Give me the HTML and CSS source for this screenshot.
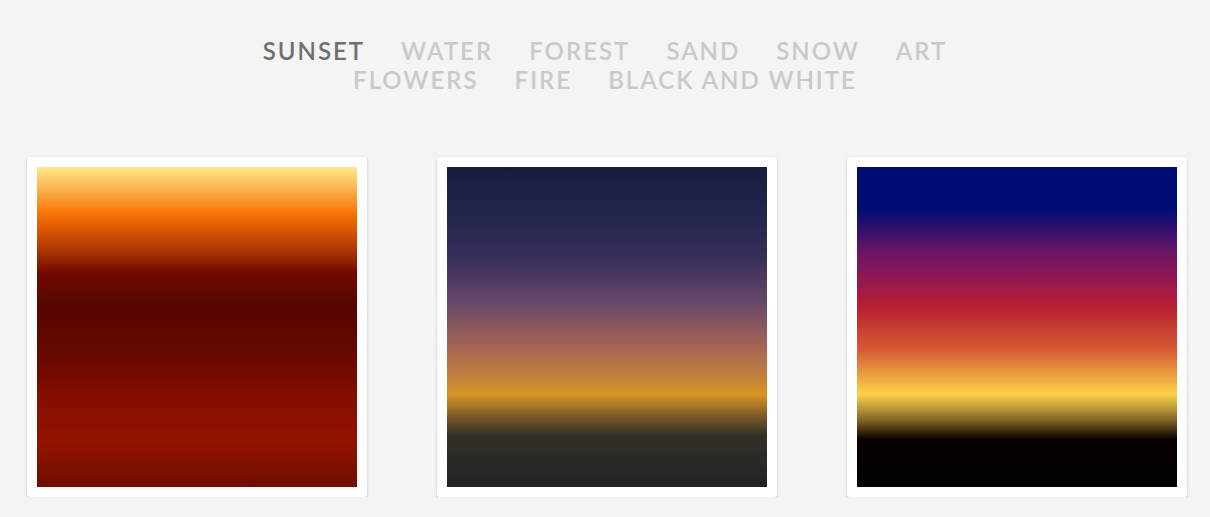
FILE: index.html
```html
<!DOCTYPE html>
<html lang="en">
<head>
<meta charset="utf-8">
<title>Gradients</title>
<link rel="stylesheet" href="styles.css">
</head>
<body>
<nav class="nav">
  <ul class="nav-list">
    <li class="nav-item active">SUNSET</li>
    <li class="nav-item">WATER</li>
    <li class="nav-item">FOREST</li>
    <li class="nav-item">SAND</li>
    <li class="nav-item">SNOW</li>
    <li class="nav-item">ART</li>
    <li class="nav-item">FLOWERS</li>
    <li class="nav-item">FIRE</li>
    <li class="nav-item">BLACK AND WHITE</li>
  </ul>
</nav>
<main class="cards">
  <div class="card"><div class="swatch swatch-1"></div></div>
  <div class="card"><div class="swatch swatch-2"></div></div>
  <div class="card"><div class="swatch swatch-3"></div></div>
</main>
</body>
</html>
```
FILE: styles.css
```css
html, body {
  margin: 0;
  padding: 0;
  background: #f4f4f4;
}
body {
  font-family: Lato, "Open Sans", sans-serif;
}
.nav {
  padding-top: 36px;
}
.nav-list {
  list-style: none;
  margin: 0 auto;
  padding: 0;
  width: 780px;
  display: flex;
  flex-wrap: wrap;
  justify-content: center;
}
.nav-item {
  margin: 0 18px;
  font-size: 24px;
  line-height: 29px;
  font-weight: 600;
  letter-spacing: 2px;
  color: #c9c9c9;
}
.nav-item.active {
  color: #6f6f6f;
}
.cards {
  display: flex;
  gap: 70px;
  padding-left: 27px;
  margin-top: 63px;
}
.card {
  background: #fff;
  padding: 10px;
  border-radius: 3px;
  box-shadow: 0 1px 3px rgba(0, 0, 0, 0.22);
}
.swatch {
  width: 320px;
  height: 320px;
}
.swatch-1 {
  background: linear-gradient(to bottom,
    #ffe98b 0%,
    #f9b24d 7%,
    #f97306 14.6%,
    #b43b02 25%,
    #730a00 33%,
    #560600 42.7%,
    #650800 58%,
    #860e00 73%,
    #931300 86%,
    #6f0c00 100%);
}
.swatch-2 {
  background: linear-gradient(to bottom,
    #161d3e 0%,
    #1d2448 10%,
    #362d58 28%,
    #654769 41.7%,
    #a56455 56%,
    #c78638 67%,
    #da9424 71%,
    #6c5228 79%,
    #332f28 84%,
    #282a25 93%,
    #1e2220 100%);
}
.swatch-3 {
  background: linear-gradient(to bottom,
    #000e74 0%,
    #000e74 13.5%,
    #671567 26%,
    #961a4e 36%,
    #b61c33 43%,
    #d45a32 57%,
    #fed24b 71%,
    #836726 79%,
    #080200 85%,
    #020005 100%);
}
```
